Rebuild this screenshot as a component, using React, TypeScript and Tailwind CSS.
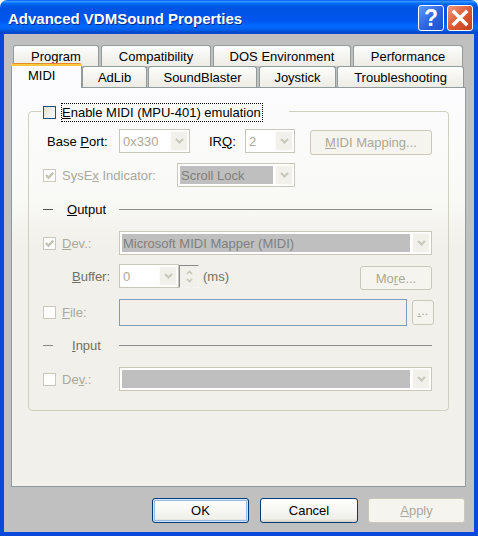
import React from 'react';

const FONT = "font-['Liberation_Sans',Arial,sans-serif]";

// XP-style checkbox, 13x13
const Check: React.FC<{ checked?: boolean; disabled?: boolean }> = ({ checked = false, disabled = false }) => (
  <span
    className={
      disabled
        ? 'w-[13px] h-[13px] shrink-0 border border-[#cac8bb] bg-white flex items-center justify-center'
        : 'w-[13px] h-[13px] shrink-0 border border-[#1c5180] bg-[linear-gradient(135deg,#dcdcd7,#ffffff)] flex items-center justify-center'
    }
  >
    {checked && (
      <svg width="11" height="11" viewBox="0 0 11 11">
        <path d="M2 5 L4.5 7.8 L9.2 2.6" stroke={disabled ? '#c4c2b2' : '#21a121'} strokeWidth="2.4" fill="none" />
      </svg>
    )}
  </span>
);

const DropBtn: React.FC = () => (
  <div className="w-[18px] my-[1px] mr-[1px] bg-[#f1f0eb] border border-[#fbfbf8] flex items-center justify-center">
    <svg width="9" height="6" viewBox="0 0 9 6">
      <path d="M1 1 L4.5 4.5 L8 1" stroke="#c9c7ba" strokeWidth="2" fill="none" />
    </svg>
  </div>
);

// disabled combobox
const Combo: React.FC<{ className: string; value?: string; filled?: boolean }> = ({ className, value = '', filled = false }) => (
  <div className={`${className} h-[24px] shrink-0 border border-[#c9c7ba] bg-white flex`}>
    <div
      className={
        filled
          ? 'flex-1 m-[2px] pl-[1px] flex items-center overflow-hidden whitespace-nowrap bg-[#bfbfbf] text-[#7f7f7f]'
          : 'flex-1 m-[2px] pl-[1px] flex items-center overflow-hidden whitespace-nowrap text-[#aca899]'
      }
    >
      {value}
    </div>
    <DropBtn />
  </div>
);

const DisabledBtn: React.FC<{ className: string; children: React.ReactNode }> = ({ className, children }) => (
  <div
    className={`${className} shrink-0 rounded-[3px] border border-[#cac8bb] bg-[#f5f4ee] text-[#aca899] flex items-center justify-center whitespace-nowrap`}
  >
    {children}
  </div>
);

const Tab: React.FC<{ className: string; label: string }> = ({ className, label }) => (
  <div
    className={`${className} relative h-[21px] shrink-0 border border-b-0 border-[#919b9c] rounded-t-[3px] bg-[linear-gradient(#fdfdfc,#ecebe5)] flex justify-center pt-[3px] whitespace-nowrap`}
  >
    {label}
  </div>
);

const Divider: React.FC<{ label: React.ReactNode; dark?: boolean; labelClass: string }> = ({ label, dark = false, labelClass }) => (
  <div className="flex items-center h-[16px] pl-[14px]">
    <div className={dark ? 'w-[10px] h-[1px] bg-[#555]' : 'w-[10px] h-[1px] bg-[#8a887c]'} />
    <div className={labelClass}>{label}</div>
    <div className="w-[313px] h-[1px] bg-[#8c8c8c]" />
  </div>
);

export default function App() {
  return (
    <div className={`w-[478px] h-[536px] flex flex-col ${FONT} text-[13px] leading-[15px] text-black`}>
      {/* title bar */}
      <div className="h-[34px] shrink-0 rounded-t-[7px] bg-[linear-gradient(to_bottom,#0058ee_0%,#3593ff_4%,#288eff_6%,#127dff_8%,#036ffc_10%,#0262ee_14%,#0057e5_20%,#0054e3_24%,#0055eb_56%,#005bf5_66%,#026afe_76%,#0062ef_86%,#0052d6_92%,#0046c4_97%,#0a48d8_100%)] flex items-center pl-[8px] pr-[5px]">
        <div className="mt-[3px] text-white font-bold text-[15px] leading-[18px] [text-shadow:1px_1px_0_#0b2a8c] whitespace-nowrap">
          Advanced VDMSound Properties
        </div>
        <div className="ml-auto mt-[2px] flex gap-[3px]">
          <div className="w-[26px] h-[26px] rounded-[3px] border border-white bg-[linear-gradient(135deg,#5b9bff,#2a63e0_55%,#1d4fcf)] flex items-center justify-center text-white font-bold text-[23px] leading-none">
            ?
          </div>
          <div className="w-[26px] h-[26px] rounded-[3px] border border-white bg-[linear-gradient(135deg,#ef9a7c,#dd5a35_50%,#c43e1a)] flex items-center justify-center">
            <svg width="18" height="18" viewBox="0 0 18 18">
              <path d="M3 3 L15 15 M15 3 L3 15" stroke="white" strokeWidth="3.4" strokeLinecap="square" />
            </svg>
          </div>
        </div>
      </div>

      {/* window body */}
      <div className="flex-1 flex flex-col bg-[#c0c0c0] border-x-[4px] border-b-[4px] border-[#0a48dc]">
        {/* tabs, back row */}
        <div className="flex h-[21px] mt-[11px] ml-[9px]">
          <Tab className="w-[86px]" label="Program" />
          <Tab className="w-[110px] ml-[2px]" label="Compatibility" />
          <Tab className="w-[138px] ml-[2px]" label="DOS Environment" />
          <Tab className="w-[110px] ml-[2px]" label="Performance" />
        </div>
        {/* tabs, front row */}
        <div className="flex items-end h-[24px] -mt-[3px] ml-[7px]">
          <div className="relative z-10 w-[71px] h-[25px] -mb-[1px] rounded-t-[3px] overflow-hidden bg-[#fcfcfe] flex flex-col">
            <div className="h-[1px] bg-[#e68b2c]" />
            <div className="h-[2px] bg-[#ffc73c]" />
            <div className="flex-1 border-x border-[#919b9c] pl-[16px] pt-[2px]">MIDI</div>
          </div>
          <Tab className="w-[65px]" label="AdLib" />
          <Tab className="w-[109px] ml-[1px]" label="SoundBlaster" />
          <Tab className="w-[77px] ml-[2px]" label="Joystick" />
          <Tab className="w-[127px] ml-[1px]" label="Troubleshooting" />
        </div>

        {/* tab page */}
        <div className="ml-[7px] w-[455px] h-[400px] shrink-0 border border-[#919b9c] bg-[linear-gradient(to_bottom,#fcfcfe_0%,#f9f9f6_28%,#f1f0ea_40%)]">
          <div className="relative ml-[16px] mt-[23px] w-[421px] h-[300px] border border-[#d0d0bf] rounded-[4px] flex flex-col pt-[17px]">
            {/* caption checkbox */}
            <div className="absolute left-[12px] -top-[9px] w-[248px] h-[19px] bg-[#fbfbfb] flex items-center">
              <div className="ml-[2px]">
                <Check />
              </div>
              <div className="ml-[5px] h-[19px] border border-dotted border-black pr-[1px] flex items-center whitespace-nowrap">
                <span>
                  <u>E</u>nable MIDI (MPU-401) emulation
                </span>
              </div>
            </div>

            {/* base port / irq */}
            <div className="flex items-start h-[24px] pl-[18px]">
              <div className="w-[72px] self-center">
                Base <u>P</u>ort:
              </div>
              <Combo className="w-[71px]" value="0x330" />
              <div className="w-[36px] ml-[19px] self-center">
                IR<u>Q</u>:
              </div>
              <Combo className="w-[50px]" value="2" />
              <DisabledBtn className="w-[122px] h-[25px] ml-[15px] mt-[1px]">
                <span>
                  <u>M</u>IDI Mapping...
                </span>
              </DisabledBtn>
            </div>

            {/* sysex */}
            <div className="flex items-center h-[24px] mt-[10px] pl-[14px]">
              <Check checked disabled />
              <div className="w-[115px] ml-[6px] text-[#aca899]">
                SysE<u>x</u> Indicator:
              </div>
              <Combo className="w-[118px]" value="Scroll Lock" filled />
            </div>

            <div className="mt-[14px]">
              <Divider
                dark
                labelClass="w-[52px] ml-[14px]"
                label={
                  <span>
                    <u>O</u>utput
                  </span>
                }
              />
            </div>

            {/* output device */}
            <div className="flex items-center h-[24px] mt-[14px] pl-[14px]">
              <Check checked disabled />
              <div className="w-[57px] ml-[6px] text-[#aca899]">
                <u>D</u>ev.:
              </div>
              <Combo className="w-[313px]" value="Microsoft MIDI Mapper (MIDI)" filled />
            </div>

            {/* buffer */}
            <div className="flex items-start h-[24px] mt-[9px] pl-[43px] pr-[16px]">
              <div className="w-[47px] self-center text-[#716f64]">
                <u>B</u>uffer:
              </div>
              <Combo className="w-[60px]" value="0" />
              <div className="w-[20px] h-[23px] mt-[1px] border-l border-t border-[#8a8a8a] border-r border-b border-r-[#f4f4f4] border-b-[#f4f4f4] bg-[#f1f0eb] flex flex-col items-center justify-center gap-[3px]">
                <svg width="7" height="5" viewBox="0 0 7 5">
                  <path d="M1 4 L3.5 1.5 L6 4" stroke="#c9c7ba" strokeWidth="1.6" fill="none" />
                </svg>
                <svg width="7" height="5" viewBox="0 0 7 5">
                  <path d="M1 1 L3.5 3.5 L6 1" stroke="#c9c7ba" strokeWidth="1.6" fill="none" />
                </svg>
              </div>
              <div className="ml-[4px] self-center text-[#716f64]">(ms)</div>
              <DisabledBtn className="w-[72px] h-[24px] ml-auto mt-[2px]">
                <span>
                  Mo<u>r</u>e...
                </span>
              </DisabledBtn>
            </div>

            {/* file */}
            <div className="flex items-center h-[27px] mt-[11px] pl-[14px]">
              <Check disabled />
              <div className="w-[57px] ml-[6px] text-[#aca899]">
                <u>F</u>ile:
              </div>
              <div className="w-[288px] h-[27px] shrink-0 border border-[#7f9db9]" />
              <DisabledBtn className="w-[22px] h-[25px] ml-[5px]">
                <span className="-mt-[4px]">
                  <u>.</u>..
                </span>
              </DisabledBtn>
            </div>

            <div className="mt-[11px]">
              <Divider
                labelClass="w-[47px] ml-[19px] text-[#716f64]"
                label={
                  <span>
                    <u>I</u>nput
                  </span>
                }
              />
            </div>

            {/* input device */}
            <div className="flex items-center h-[24px] mt-[14px] pl-[14px]">
              <Check disabled />
              <div className="w-[57px] ml-[6px] text-[#aca899]">
                De<u>v</u>.:
              </div>
              <Combo className="w-[313px]" filled />
            </div>
          </div>
        </div>

        {/* dialog buttons */}
        <div className="flex mt-[11px] ml-[148px]">
          <div className="w-[97px] h-[25px] rounded-[3px] border border-[#003c74] bg-[linear-gradient(#ffffff,#f0f0ea_85%,#d6d0c5)] shadow-[inset_0_0_0_1px_#cee7ff,inset_0_0_0_2px_#98b8ea] flex items-center justify-center">
            OK
          </div>
          <div className="w-[98px] h-[25px] ml-[11px] rounded-[3px] border border-[#003c74] bg-[linear-gradient(#ffffff,#f0f0ea_85%,#d6d0c5)] flex items-center justify-center">
            Cancel
          </div>
          <DisabledBtn className="w-[97px] h-[25px] ml-[10px]">
            <span>
              <u>A</u>pply
            </span>
          </DisabledBtn>
        </div>
      </div>
    </div>
  );
}
